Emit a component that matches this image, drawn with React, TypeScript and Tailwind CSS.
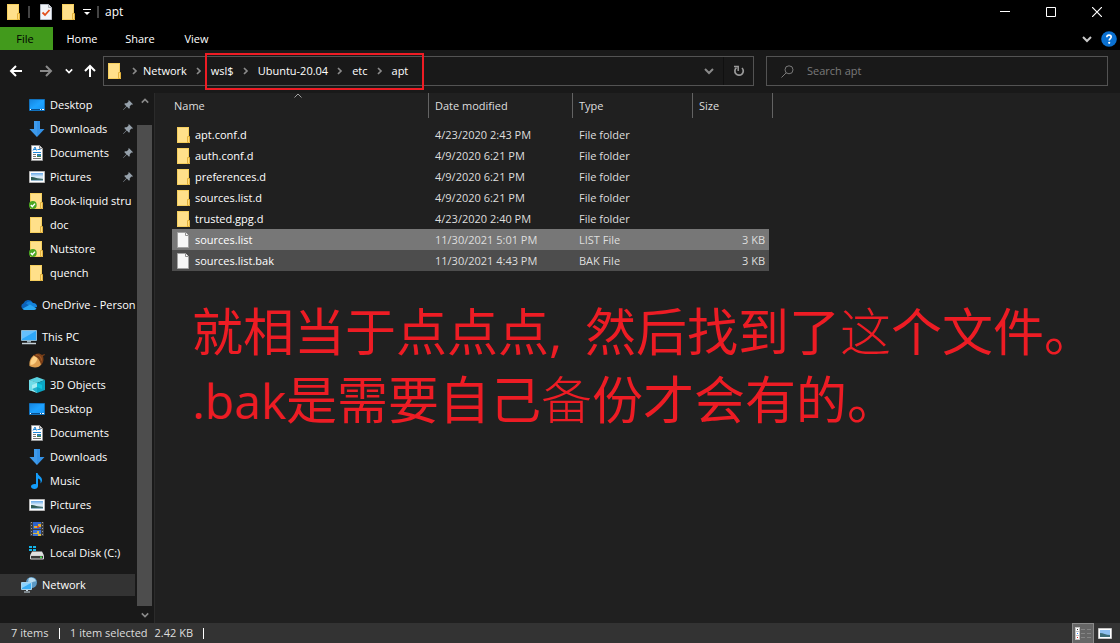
import React from "react";

type IconProps = { className?: string };

const Folder = ({ synced }: { synced?: boolean }) => (
  <svg width="16" height="16" viewBox="0 0 16 16" className="shrink-0" aria-hidden="true">
    <path d="M1 0h12v10h1v6H1z" fill="#ffe08a" />
    <path d="M1 0h12v10h-1V1H2v14h10v1H1z" fill="#f6cf5e" />
    <path d="M11.500 9.500h2v6h-2z" fill="#ffdc7c" stroke="#e3b23c" />
    {synced && (
      <g>
        <circle cx="3.800" cy="12" r="3.900" fill="#4aa521" />
        <path d="M1.800 12l1.500 1.600L6 10.600" fill="none" stroke="#fff" strokeWidth="1.400" />
      </g>
    )}
  </svg>
);

const FileIcon = () => (
  <svg width="16" height="16" viewBox="0 0 16 16" className="shrink-0" aria-hidden="true">
    <path d="M1.500.5h8l3 3v12h-11z" fill="#f7f7f7" stroke="#a3a3a3" />
    <path d="M9.500.5v3h3" fill="#fff" stroke="#8f8f8f" />
  </svg>
);

const Desktop = () => (
  <svg width="16" height="16" viewBox="0 0 16 16" aria-hidden="true">
    <defs>
      <linearGradient id="desk" x1="0" y1="0" x2="1" y2="1">
        <stop offset="0" stopColor="#1583dd" />
        <stop offset=".5" stopColor="#1ea2ff" />
        <stop offset="1" stopColor="#1595f5" />
      </linearGradient>
    </defs>
    <path d="M.5 2.500h15v11H.5z" fill="url(#desk)" stroke="#1272bd" />
    <path d="M1 12.500h14" stroke="#0b4f8c" />
    <path d="M1 12.500h1M11 12.500h1M13 12.500h2" stroke="#fff" />
  </svg>
);

const Download = () => (
  <svg width="16" height="16" viewBox="0 0 16 16" aria-hidden="true">
    <path d="M5 0h6v8h4.500L8 16 .5 8H5z" fill="#3391e6" />
    <path d="M5 0h3v16L.5 8H5z" fill="#4aa3f0" opacity=".5" />
  </svg>
);

const Document = () => (
  <svg width="16" height="16" viewBox="0 0 16 16" aria-hidden="true">
    <path d="M2.500.5h8l3 3v12h-11z" fill="#fff" stroke="#9a9a9a" />
    <path d="M10.500.5v3h3" fill="#ddd" stroke="#8a8a8a" />
    <path d="M4 5.500L6 2l1.500 3.500M5 4.500h2M8.500 4.500h3M4 7.500h8" stroke="#1e86d8" fill="none" />
    <path d="M4 9.500h3M4 11.500h3M4 13.500h8" stroke="#777" />
    <path d="M8 9h4v3H8z" fill="#2c7fae" />
    <path d="M8 11h4v1H8z" fill="#43844a" />
  </svg>
);

const Pictures = () => (
  <svg width="16" height="16" viewBox="0 0 16 16" aria-hidden="true">
    <defs>
      <linearGradient id="sky" x1="0" y1="0" x2="0" y2="1">
        <stop offset="0" stopColor="#67a9e8" />
        <stop offset=".5" stopColor="#e3f1fb" />
        <stop offset="1" stopColor="#8db2c9" />
      </linearGradient>
    </defs>
    <path d="M.5 2.500h15v11H.5z" fill="#fff" stroke="#b5b5b5" />
    <path d="M2 4h12v8H2z" fill="url(#sky)" />
    <path d="M2 8c3-.5 5 1 8 1.500l4 .5v.8L2 11z" fill="#2f5d55" />
  </svg>
);

const OneDrive = () => (
  <svg width="16" height="16" viewBox="0 0 16 16" aria-hidden="true">
    <path d="M3 12.500A3.200 3.200 0 0 1 2.500 6.300 5 5 0 0 1 11.500 5.500L9 9z" fill="#0c62b8" />
    <path d="M5 6.500a4.500 4.500 0 0 1 7-.5 3.600 3.600 0 0 1 4 4L12 11z" fill="#1483dc" />
    <path d="M1.500 11.800L9 7.600l6.500 4a2.500 2.500 0 0 1-2.200 1.400H3.300a3 3 0 0 1-1.800-1.200z" fill="#2aa7f2" />
  </svg>
);

const ThisPC = () => (
  <svg width="16" height="16" viewBox="0 0 16 16" aria-hidden="true">
    <path d="M.5 1.500h15v10H.5z" fill="#2ea7f7" stroke="#8fb7cf" />
    <path d="M1 2h14L1 10z" fill="#7dcbff" opacity=".7" />
    <path d="M6 12h4v1.500H6z" fill="#9db0bc" />
    <path d="M1 14.500h14" stroke="#c7d2d9" strokeWidth="1.500" />
  </svg>
);

const Acorn = () => (
  <svg width="16" height="16" viewBox="0 0 16 16" aria-hidden="true">
    <path d="M5 2C1 5 0 9 .5 13c3 2 10 2.500 12-2l-3-7z" fill="#e0a050" />
    <path d="M5 3C2 6 1 9 1.500 12 5 12 8 9 8.500 5z" fill="#ffd285" />
    <path d="M4.500 2.500C7-.2 11-.2 13 2l2.500-1 .5 1-2 1c1 3.500.5 7-2 9C11.500 8 8.500 4 4.500 2.500z" fill="#7a3f17" />
    <path d="M7 2c3-.5 5.500 2 5.500 5.500" fill="none" stroke="#a9602a" />
  </svg>
);

const Cube = () => (
  <svg width="16" height="16" viewBox="0 0 16 16" aria-hidden="true">
    <path d="M0 3l8-3 8 3-8 3z" fill="#59d3e2" />
    <path d="M0 3l8 3v10l-8-3z" fill="#a5edf3" />
    <path d="M16 3L8 6v10l8-3z" fill="#0ba5c4" />
    <path d="M0 3l8 3-5 2v6l-3-1z" fill="#6fdce8" />
    <path d="M3 12l5-2v6z" fill="#25b2cc" />
    <path d="M8 6l5 2v4l-5-2z" fill="#10c3de" />
  </svg>
);

const Music = () => (
  <svg width="16" height="16" viewBox="0 0 16 16" aria-hidden="true">
    <path d="M7 0h1.600c.3 2.500 4.400 3.500 4.400 7 0 1.600-.6 2.700-1.500 3.500.6-3-.5-4.500-2.500-5V13c0 2-1.700 3-3.500 3C3.500 16 2 15 2 13.500S3.600 11 5.500 11c.6 0 1.100.1 1.500.3z" fill="#149dfa" />
  </svg>
);

const Videos = () => (
  <svg width="16" height="16" viewBox="0 0 16 16" aria-hidden="true">
    <path d="M1 1h14v14H1z" fill="#3b3b3b" />
    <path d="M2.500 1v14M13.500 1v14" stroke="#999" strokeDasharray="1 2" />
    <path d="M4 1h8v7H4z" fill="#2f62c9" />
    <path d="M4 9h8v6H4z" fill="#3d73d8" />
    <path d="M5 5h3v2H5zM9 3h3v3H9z" fill="#e4a92c" />
    <path d="M8 5h2v2H8z" fill="#d24a35" />
    <path d="M4 12h4v-2h2v3h2v2H9v-2H4z" fill="#d9b53e" />
  </svg>
);

const Disk = () => (
  <svg width="16" height="16" viewBox="0 0 16 16" aria-hidden="true">
    <path d="M0 1h3v2H0zM4 1h3v2H4zM0 4h3v2H0zM4 4h3v2H4z" fill="#12b4ea" />
    <path d="M3 6.500h10l2 4H1z" fill="#e1e1e1" />
    <path d="M1.500 10.500h13v3.500h-13z" fill="#3a3a3a" stroke="#d5d5d5" />
    <path d="M11 12.300h2" stroke="#49e04c" strokeWidth="1.500" />
  </svg>
);

const NetworkIcon = () => (
  <svg width="16" height="16" viewBox="0 0 16 16" aria-hidden="true">
    <circle cx="10.500" cy="5.500" r="5.500" fill="#5c99c4" />
    <path d="M8 1c3-1 6 0 7 3-1 1-2 0-3 1S8 4 7 5z" fill="#b9dcf0" />
    <path d="M.5 5.500h10v7H.5z" fill="#3aaef5" stroke="#a9d5ee" />
    <path d="M1 6h9L1 11z" fill="#8ad3ff" />
    <path d="M5 13h2v1H5zM3 14.500h6v1H3z" fill="#c9dbe6" />
  </svg>
);

const Pin = () => (
  <svg width="10" height="10" viewBox="0 0 12 12" aria-hidden="true">
    <path d="M7 0l5 5-1.200.6-.8-.1-2 2.200.2 1.800-1 1-2.600-2.600L.4 12 0 11.600l4-4.200L1.500 4.800l1-1 1.800.2 2.300-2-.2-.9z" fill="#96a1ab" />
  </svg>
);

const Chevron = ({ className = "" }: IconProps) => (
  <svg width="10" height="10" viewBox="0 0 10 10" className={className} aria-hidden="true">
    <path d="M1 3l4 4 4-4" fill="none" stroke="currentColor" strokeWidth="2" />
  </svg>
);

const CrumbArrow = () => (
  <svg width="24" height="10" viewBox="0 0 24 10" className="shrink-0 text-[#8a8a8a]" aria-hidden="true">
    <path d="M10 2l3 3-3 3" fill="none" stroke="currentColor" strokeWidth="1.700" />
  </svg>
);

const Arrow = ({ className = "" }: IconProps) => (
  <svg width="14" height="14" viewBox="0 0 14 14" className={className} aria-hidden="true">
    <path d="M13 7H2M7 2L2 7l5 5" fill="none" stroke="currentColor" strokeWidth="2" />
  </svg>
);

type Item = { label: string; icon: React.ReactNode; pinned?: boolean; root?: boolean; current?: boolean };

const groups: Item[][] = [
  [
    { label: "Desktop", icon: <Desktop />, pinned: true },
    { label: "Downloads", icon: <Download />, pinned: true },
    { label: "Documents", icon: <Document />, pinned: true },
    { label: "Pictures", icon: <Pictures />, pinned: true },
    { label: "Book-liquid stru", icon: <Folder synced /> },
    { label: "doc", icon: <Folder /> },
    { label: "Nutstore", icon: <Folder synced /> },
    { label: "quench", icon: <Folder /> },
  ],
  [{ label: "OneDrive - Person", icon: <OneDrive />, root: true }],
  [
    { label: "This PC", icon: <ThisPC />, root: true },
    { label: "Nutstore", icon: <Acorn /> },
    { label: "3D Objects", icon: <Cube /> },
    { label: "Desktop", icon: <Desktop /> },
    { label: "Documents", icon: <Document /> },
    { label: "Downloads", icon: <Download /> },
    { label: "Music", icon: <Music /> },
    { label: "Pictures", icon: <Pictures /> },
    { label: "Videos", icon: <Videos /> },
    { label: "Local Disk (C:)", icon: <Disk /> },
  ],
  [{ label: "Network", icon: <NetworkIcon />, root: true, current: true }],
];

const files = [
  { name: "apt.conf.d", date: "4/23/2020 2:43 PM", type: "File folder", size: "" },
  { name: "auth.conf.d", date: "4/9/2020 6:21 PM", type: "File folder", size: "" },
  { name: "preferences.d", date: "4/9/2020 6:21 PM", type: "File folder", size: "" },
  { name: "sources.list.d", date: "4/9/2020 6:21 PM", type: "File folder", size: "" },
  { name: "trusted.gpg.d", date: "4/23/2020 2:40 PM", type: "File folder", size: "" },
  { name: "sources.list", date: "11/30/2021 5:01 PM", type: "LIST File", size: "3 KB", tone: "bg-[#777777]" },
  { name: "sources.list.bak", date: "11/30/2021 4:43 PM", type: "BAK File", size: "3 KB", tone: "bg-[#4d4d4d]" },
];

function TitleBar() {
  return (
    <header className="flex h-[27px] shrink-0 items-start bg-black text-[12px]">
      <div className="flex h-6 items-center pl-[6px]">
        <Folder />
        <span className="ml-[6px] h-3 w-[2px] bg-[#444]" />
        <button aria-label="Properties" className="ml-[9px]">
          <svg width="14" height="16" viewBox="0 0 14 16" aria-hidden="true">
            <path d="M1.500.5h8l3 3v12h-11z" fill="#f2f5fa" stroke="#b7bdc6" />
            <path d="M9.500.5v3h3" fill="#dfe4ea" stroke="#a5abb3" />
            <path d="M3.500 8.500l2.500 2.500 4.500-5" fill="none" stroke="#e2511d" strokeWidth="1.800" />
          </svg>
        </button>
        <button aria-label="New folder" className="ml-2"><Folder /></button>
        <button aria-label="Customize toolbar" className="ml-[6px]">
          <svg width="8" height="8" viewBox="0 0 8 8" aria-hidden="true">
            <path d="M0 1.500h8" stroke="#fff" />
            <path d="M1 4h6L4 7z" fill="#fff" />
          </svg>
        </button>
        <span className="ml-[6px] h-3 w-[2px] bg-[#444]" />
        <h1 className="ml-[6px]">apt</h1>
      </div>
      <div className="ml-auto flex">
        <button aria-label="Minimize" className="grid h-6 w-[46px] place-items-center">
          <svg width="10" height="10" viewBox="0 0 10 10"><path d="M0 4.500h10" stroke="#fff" /></svg>
        </button>
        <button aria-label="Maximize" className="grid h-6 w-[46px] place-items-center">
          <svg width="10" height="10" viewBox="0 0 10 10"><path d="M.5.5h9v9h-9z" fill="none" stroke="#fff" /></svg>
        </button>
        <button aria-label="Close" className="grid h-6 w-[46px] place-items-center">
          <svg width="10" height="10" viewBox="0 0 10 10"><path d="M0 0l10 10M10 0L0 10" stroke="#fff" strokeWidth="1.200" /></svg>
        </button>
      </div>
    </header>
  );
}

function Ribbon() {
  return (
    <div className="flex h-[23px] shrink-0 items-stretch bg-black text-[11px]">
      <button className="w-[53px] bg-[#429a1c] pr-[3px] text-black">File</button>
      <button className="w-[58px]">Home</button>
      <button className="w-[58px]">Share</button>
      <button className="w-[55px]">View</button>
      <div className="ml-auto flex items-center gap-[9px] pr-[3px]">
        <button aria-label="Expand ribbon" className="text-[#c8c8c8]"><Chevron /></button>
        <button aria-label="Help">
          <svg width="16" height="16" viewBox="0 0 16 16" aria-hidden="true">
            <circle cx="8" cy="8" r="7.800" fill="#0a70d0" />
            <path d="M5.800 6.200c0-1.400 1-2.100 2.200-2.100s2.200.7 2.200 1.900c0 1.500-2 1.600-2 3.400" fill="none" stroke="#fff" strokeWidth="1.600" />
            <circle cx="8.200" cy="11.800" r="1.100" fill="#fff" />
          </svg>
        </button>
      </div>
    </div>
  );
}

function AddressBar() {
  return (
    <div className="flex h-[43px] shrink-0 items-start bg-[#191919] pt-[6px] pr-3 pl-[9px]">
      <div className="flex h-[30px] w-[94px] shrink-0 items-center">
        <button aria-label="Back"><Arrow /></button>
        <button aria-label="Forward" className="ml-4 text-[#8a8a8a]"><Arrow className="rotate-180" /></button>
        <button aria-label="Recent locations" className="ml-3"><Chevron className="h-2 w-2" /></button>
        <button aria-label="Up" className="ml-[10px]"><Arrow className="rotate-90" /></button>
      </div>
      <nav aria-label="Address" className="flex h-[30px] flex-1 items-center border border-[#535353] pl-[3px]">
        <Folder />
        <CrumbArrow />
        <a href="#network" className="-ml-1">Network</a>
        <CrumbArrow />
        <span className="relative flex items-center">
          <span className="pointer-events-none absolute -top-[10px] -right-[16px] -bottom-[11px] -left-[6px] border-2 border-[#ed1c24]" />
          <a href="#wsl">wsl$</a>
          <CrumbArrow />
          <a href="#ubuntu">Ubuntu-20.04</a>
          <CrumbArrow />
          <a href="#etc">etc</a>
          <CrumbArrow />
          <a href="#apt">apt</a>
        </span>
        <button aria-label="Previous locations" className="ml-auto grid h-full w-[30px] place-items-center border-r border-[#101010] text-[#8a8a8a]">
          <Chevron />
        </button>
        <button aria-label="Refresh" className="grid h-full w-[29px] place-items-center text-[#9a9a9a]">
          <svg width="12" height="12" viewBox="0 0 12 12" aria-hidden="true">
            <path d="M9 3A4.200 4.200 0 1 1 3.500 2.700" fill="none" stroke="currentColor" strokeWidth="1.700" />
            <path d="M1 1.500h4.200V6" fill="none" stroke="currentColor" strokeWidth="1.500" />
          </svg>
        </button>
      </nav>
      <label className="ml-3 flex h-[30px] w-[342px] items-center border border-[#535353] pl-[14px]">
        <svg width="13" height="13" viewBox="0 0 13 13" className="text-[#7a7a7a]" aria-hidden="true">
          <circle cx="8" cy="4.800" r="4" fill="none" stroke="currentColor" />
          <path d="M5.200 7.800L.5 12.500" stroke="currentColor" />
        </svg>
        <input
          type="search"
          aria-label="Search apt"
          placeholder="Search apt"
          className="ml-[13px] min-w-0 flex-1 bg-transparent text-[11px] outline-none placeholder:text-[#7a7a7a]"
        />
      </label>
    </div>
  );
}

function Sidebar() {
  return (
    <aside className="flex w-[155px] shrink-0 border-r border-[#2b2b2b] bg-[#191919]">
      <nav aria-label="Folders" className="flex w-[137px] flex-col gap-2 overflow-hidden pr-[2px]">
        {groups.map((group, g) => (
          <ul key={g}>
            {group.map((item) => (
              <li key={item.label} className="flex h-6 items-center">
                <a
                  href="#"
                  className={
                    "flex h-[22px] w-full items-center gap-[5px] " +
                    (item.root ? "pl-[21px]" : "pl-[29px]") +
                    (item.current ? " bg-[#333333]" : "")
                  }
                >
                  <span className="w-4 shrink-0">{item.icon}</span>
                  <span className="min-w-0 flex-1 whitespace-nowrap">{item.label}</span>
                  {item.pinned && <span className="shrink-0 pr-[2px]"><Pin /></span>}
                </a>
              </li>
            ))}
          </ul>
        ))}
      </nav>
      <div className="flex w-[15px] flex-col items-center text-[#8a8a8a]">
        <button aria-label="Scroll up" className="grid h-8 w-full shrink-0 place-items-start justify-center pt-1">
          <Chevron className="h-2 w-2 rotate-180" />
        </button>
        <div className="w-full flex-1 bg-[#4d4d4d]" />
        <button aria-label="Scroll down" className="grid h-[17px] w-full shrink-0 place-items-center">
          <Chevron className="h-2 w-2" />
        </button>
      </div>
    </aside>
  );
}

function FileTable() {
  return (
    <table className="ml-[17px] w-[601px] table-fixed border-collapse text-left">
      <colgroup>
        <col className="w-[257px]" />
        <col className="w-[144px]" />
        <col className="w-[120px]" />
        <col className="w-[76px]" />
        <col className="w-[4px]" />
      </colgroup>
      <thead className="text-[#dedede]">
        <tr>
          <th className="p-0 pb-[6px] font-normal">
            <div className="relative flex h-[25px] items-center border-r border-[#636363] pl-[2px]">
              Name
              <svg width="8" height="5" viewBox="0 0 8 5" className="absolute top-0 left-[122px] text-[#a0a0a0]" aria-hidden="true">
                <path d="M.5 4.500L4 1l3.500 3.500" fill="none" stroke="currentColor" />
              </svg>
            </div>
          </th>
          <th className="p-0 pb-[6px] font-normal">
            <div className="flex h-[25px] items-center border-r border-[#636363] pl-[6px]">Date modified</div>
          </th>
          <th className="p-0 pb-[6px] font-normal">
            <div className="flex h-[25px] items-center border-r border-[#636363] pl-[6px]">Type</div>
          </th>
          <th className="p-0 pb-[6px] font-normal">
            <div className="flex h-[25px] items-center pl-[6px]">Size</div>
          </th>
          <td className="p-0 pb-[6px]">
            <div className="h-[25px] border-r border-[#636363]" />
          </td>
        </tr>
      </thead>
      <tbody>
        {files.map((f) => (
          <tr key={f.name} className="h-[21px] text-[#dedede]">
            <td className={"p-0 pl-1 text-white " + (f.tone ?? "")}>
              <span className="flex items-center gap-[3px]">
                {f.size ? <FileIcon /> : <Folder />}
                {f.name}
              </span>
            </td>
            <td className={"p-0 pl-[6px] " + (f.tone ?? "")}>{f.date}</td>
            <td className={"p-0 pl-[6px] " + (f.tone ?? "")}>{f.type}</td>
            <td className={"p-0 pr-1 text-right " + (f.tone ?? "")}>{f.size}</td>
          </tr>
        ))}
      </tbody>
    </table>
  );
}

function Note() {
  return (
    <div className="mt-[26px] pl-[37px] text-[51px] leading-[68px] whitespace-nowrap text-[#ed1c24]">
      <p>
        就相当于点点点<span className="inline-block w-[36px]">,</span>然后找到了
        <span className="font-light">这</span>个文件。
      </p>
      <p>
        <span className="text-[48px]">.bak</span>是需要自己
        <span className="font-light">备</span>份才会有的。
      </p>
    </div>
  );
}

function StatusBar() {
  return (
    <footer className="flex h-5 shrink-0 items-center bg-[#333333] pl-[11px] text-[#dedede]">
      <span className="w-12">7 items</span>
      <span className="h-[11px] w-px bg-white" />
      <span className="ml-[10px]">1 item selected</span>
      <span className="ml-[7px]">2.42 KB</span>
      <span className="ml-[10px] h-[11px] w-px bg-white" />
      <div className="ml-auto flex h-full items-center pr-2">
        <button aria-label="Details view" className="grid h-full w-[22px] place-items-center border border-b-0 border-[#8a8a8a] bg-[#666666]">
          <svg width="16" height="13" viewBox="0 0 16 13" aria-hidden="true">
            <path d="M0 0h5v13H0z" fill="#c4c4c4" />
            <path d="M1 1h3v3H1zM1 5h3v3H1zM1 9h3v3H1z" fill="#fff" />
            <path d="M2 2h1v1H2z" fill="#333" />
            <path d="M2 6h1v1H2z" fill="#3b82f6" />
            <path d="M2 10h1v1H2z" fill="#d22" />
            <path d="M6 2.500h4M12 2.500h4M6 6.500h4M12 6.500h4M6 10.500h4M12 10.500h4" stroke="#858585" />
          </svg>
        </button>
        <button aria-label="Large icons view" className="ml-1">
          <svg width="14" height="11" viewBox="0 0 14 11" aria-hidden="true">
            <path d="M.5.5h13v10H.5z" fill="#fff" stroke="#c5c5c5" />
            <path d="M2 2h10v7H2z" fill="#8fc0f0" />
            <path d="M2 5c3 0 6 2 10 2v2H2z" fill="#3d6d78" />
          </svg>
        </button>
      </div>
    </footer>
  );
}

export default function App() {
  return (
    <div className="flex h-screen flex-col overflow-hidden bg-[#202020] font-['Open_Sans','Noto_Sans_CJK_SC',sans-serif] text-[11px] leading-4 text-white">
      <TitleBar />
      <Ribbon />
      <AddressBar />
      <div className="flex min-h-0 flex-1">
        <Sidebar />
        <main className="min-w-0 flex-1 overflow-hidden">
          <FileTable />
          <Note />
        </main>
      </div>
      <StatusBar />
    </div>
  );
}
